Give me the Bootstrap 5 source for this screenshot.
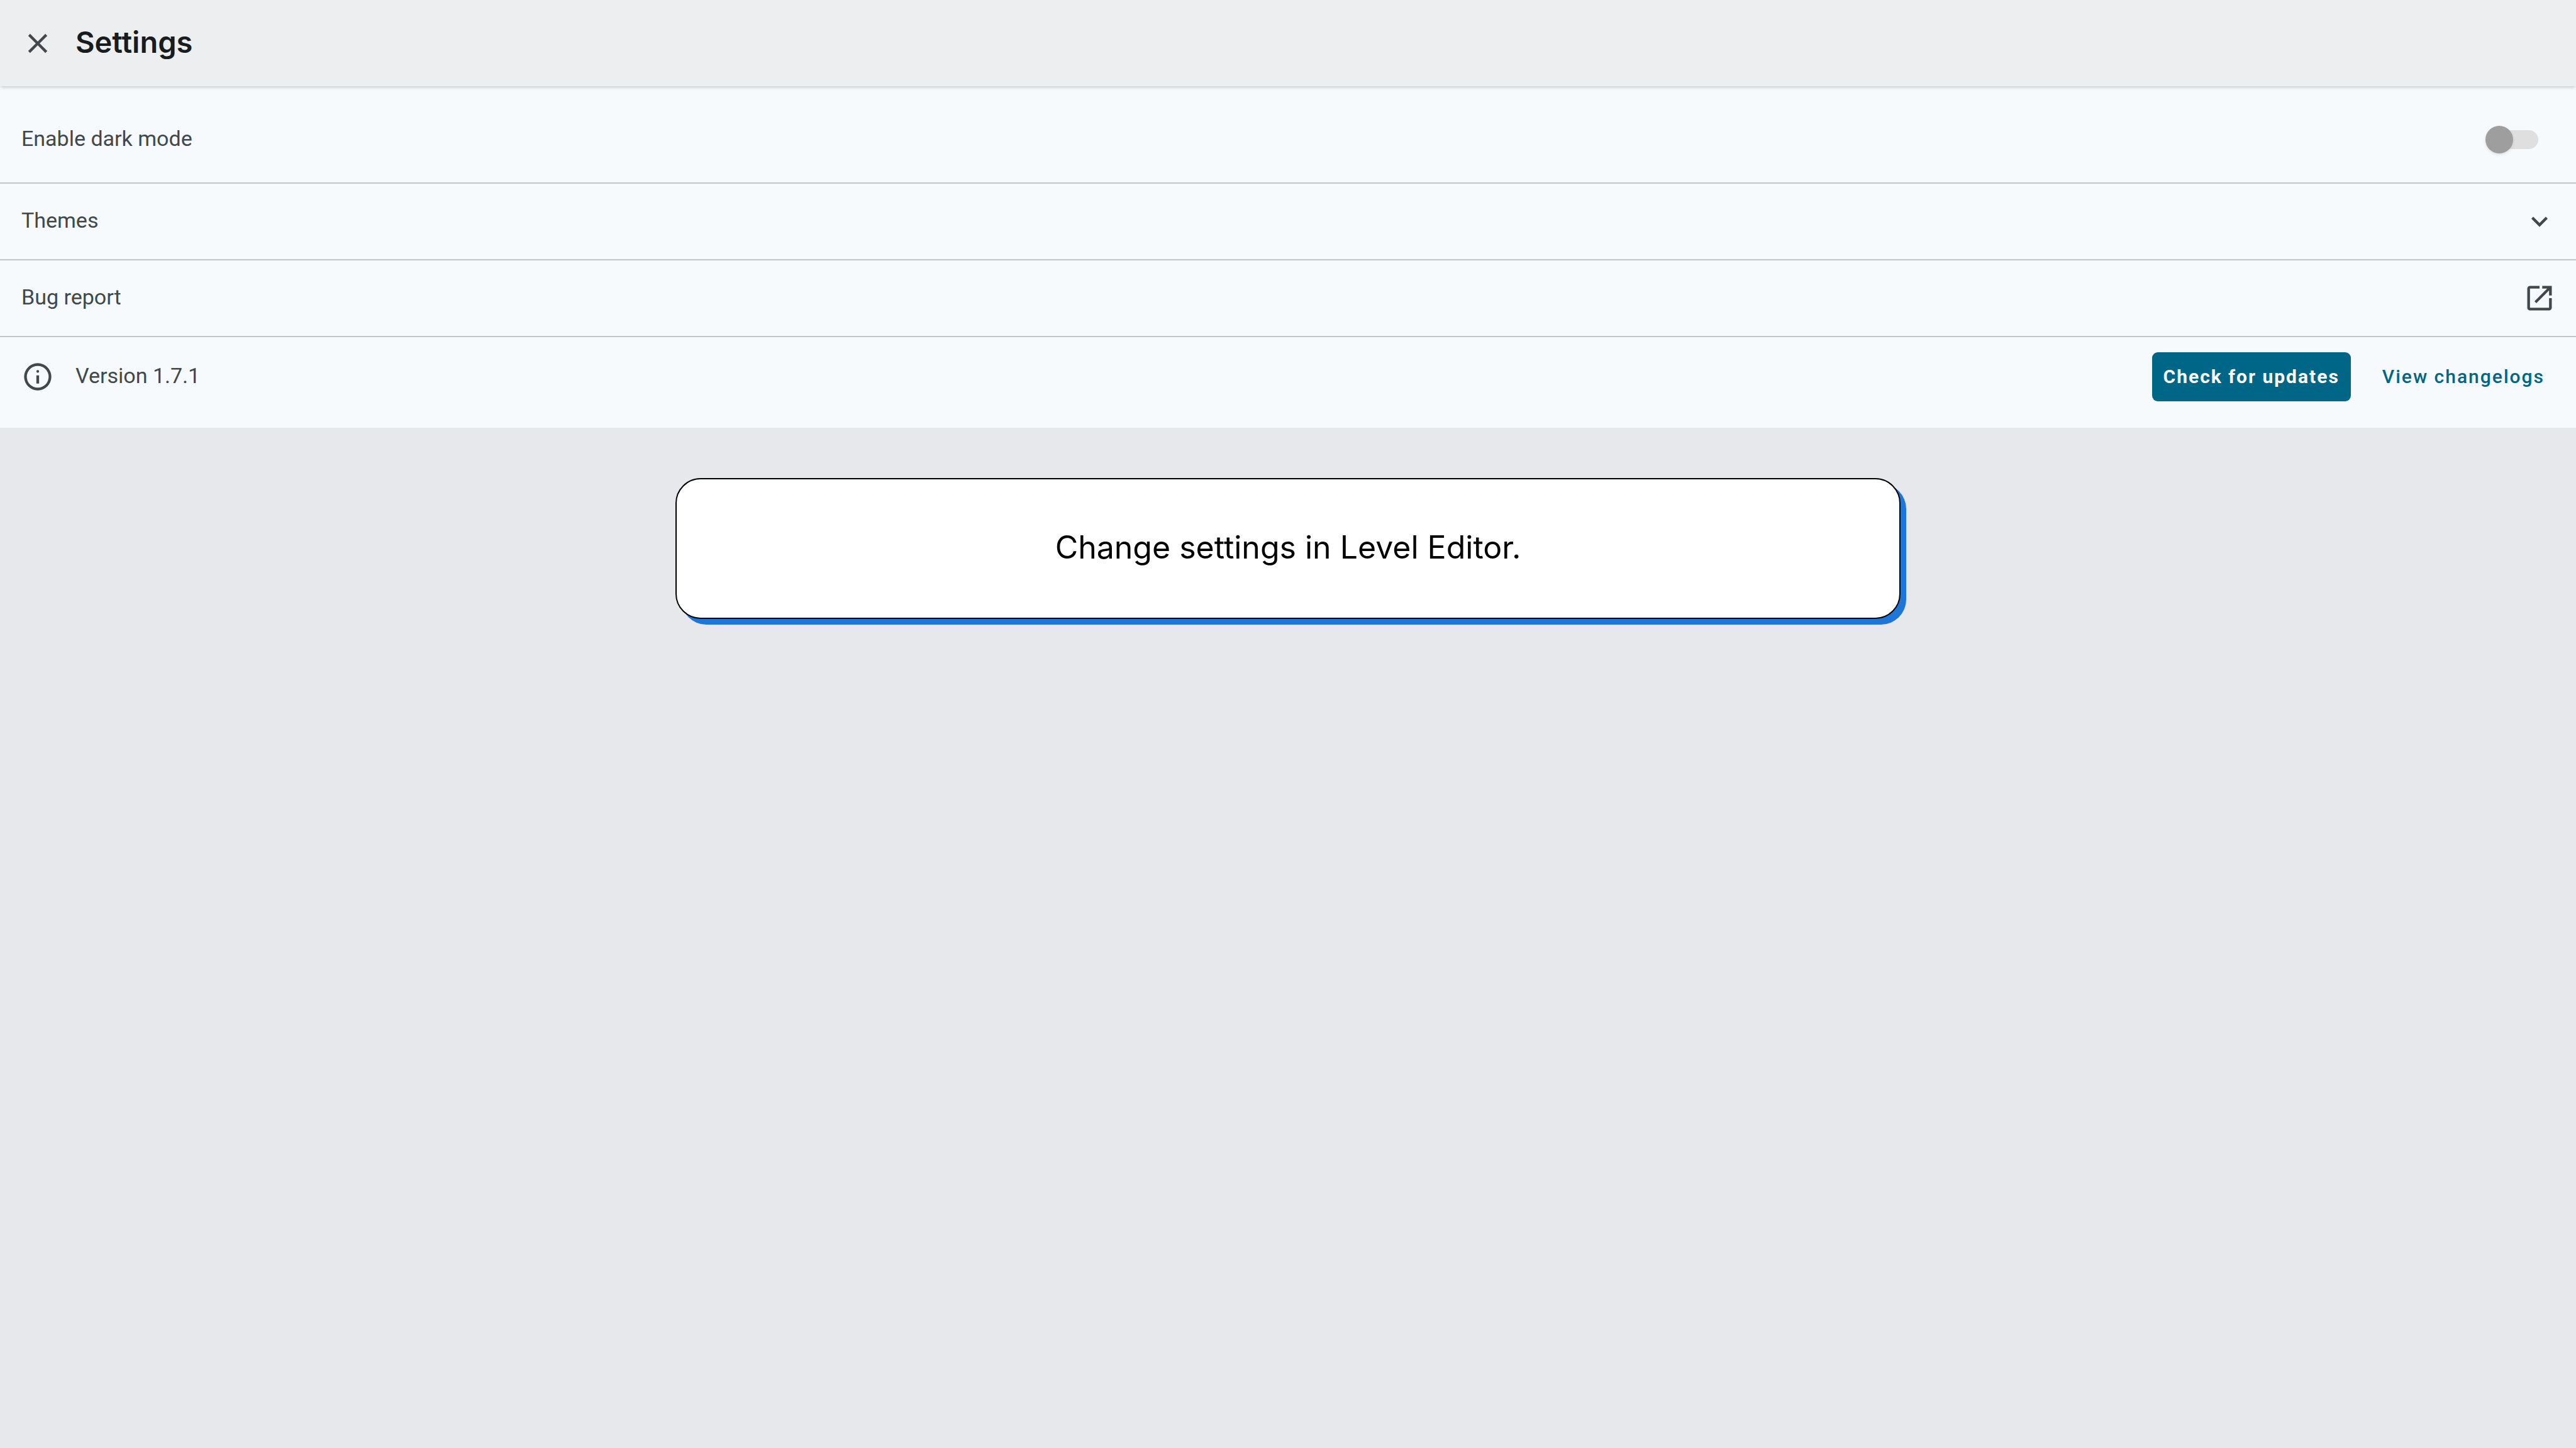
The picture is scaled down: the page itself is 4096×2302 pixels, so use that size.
<!DOCTYPE html>
<html lang="en">
<head>
<meta charset="utf-8">
<meta name="viewport" content="width=device-width, initial-scale=1">
<title>Settings</title>
<link href="https://cdn.jsdelivr.net/npm/bootstrap@5.3.0/dist/css/bootstrap.min.css" rel="stylesheet">
<style>
  body { background: #e6e8ec; color: #40484c; font-family: Roboto, sans-serif; font-size: 34px; line-height: 48px; }
  .icon { width: 52px; height: 52px; fill: #40484c; flex: none; display: block; }
  .app-bar { background: #edeef0; min-height: 137px; padding: 0 32px 0 34px; gap: 34px; z-index: 1; box-shadow: 0 4px 5px -2px rgba(0, 0, 0, .2); }
  .app-title { color: #191c1e; font-family: Inter, sans-serif; font-size: 47px; line-height: 56px; font-weight: 600; padding-bottom: 4px; }
  .settings-list { background: #f6fafd; }
  .setting { min-height: 122px; padding: 0 32px 0 34px; gap: 34px; color: #40484c; background: transparent; border: 0; border-bottom: 2px solid #c0c8cd; text-align: left; }
  .setting-label { padding-bottom: 4px; }
  .setting-dark { min-height: 155px; padding-top: 16px; }
  .setting-version { min-height: 144px; padding-bottom: 18px; border-bottom: 0; }
  .toggle { appearance: none; position: relative; width: 84px; height: 44px; margin: 0 28px 0 0; background: transparent; cursor: pointer; }
  .toggle::before { content: ""; position: absolute; inset: 7px 0 7px 14px; border-radius: 15px; background: #dfdfdf; }
  .toggle::after { content: ""; position: absolute; left: 0; top: 0; width: 44px; height: 44px; border-radius: 50%; background: #9e9e9e; box-shadow: 0 2px 4px rgba(0, 0, 0, .1); }
  .toggle:checked::after { left: 40px; background: #006687; }
  .action { font-size: 30px; line-height: 42px; padding: 18px; border: 0; border-radius: 9px; letter-spacing: 2px; }
  .action-main, .action-main:hover { background: #006687; color: #fff; font-weight: 700; }
  .action-text { color: #006687; font-weight: 500; }
  .action-group { gap: 32px; }
  .message { width: 47.56%; min-height: 224px; margin-top: 80px; padding-bottom: 4px; border: 2px solid #000; border-radius: 40px; background: #fff; color: #000; box-shadow: 9px 9px 0 #1f76d9; font-family: Inter, sans-serif; font-size: 50px; line-height: 64px; }
</style>
<script src="https://cdn.jsdelivr.net/npm/bootstrap@5.3.0/dist/js/bootstrap.bundle.min.js"></script>
</head>
<body class="min-vh-100">
<header class="app-bar d-flex align-items-center position-relative">
  <button type="button" class="btn p-0 border-0" aria-label="Close">
    <svg class="icon" viewBox="0 0 24 24" aria-hidden="true"><path d="M19 6.41 17.59 5 12 10.59 6.41 5 5 6.41 10.59 12 5 17.59 6.41 19 12 13.41 17.59 19 19 17.59 13.41 12z"/></svg>
  </button>
  <h1 class="app-title m-0">Settings</h1>
</header>
<main>
  <section class="settings-list d-flex flex-column">
    <div class="setting setting-dark d-flex align-items-center justify-content-between">
      <label class="setting-label" for="dark-mode">Enable dark mode</label>
      <input class="toggle" type="checkbox" role="switch" id="dark-mode">
    </div>
    <button type="button" class="setting d-flex align-items-center justify-content-between w-100">
      <span class="setting-label">Themes</span>
      <svg class="icon" viewBox="0 0 24 24" aria-hidden="true"><path d="M16.59 8.59 12 13.17 7.41 8.59 6 10l6 6 6-6z"/></svg>
    </button>
    <a href="#bug-report" class="setting d-flex align-items-center justify-content-between text-decoration-none">
      <span class="setting-label">Bug report</span>
      <svg class="icon" viewBox="0 0 24 24" aria-hidden="true"><path d="M5 21q-.825 0-1.412-.587Q3 19.825 3 19V5q0-.825.588-1.413Q4.175 3 5 3h7v2H5v14h14v-7h2v7q0 .825-.587 1.413Q19.825 21 19 21Zm4.7-5.3-1.4-1.4L17.6 5H14V3h7v7h-2V6.4Z"/></svg>
    </a>
    <div class="setting setting-version d-flex align-items-center">
      <svg class="icon" viewBox="0 0 24 24" aria-hidden="true"><path d="M11 17h2v-6h-2zm1-8q.425 0 .713-.288Q13 8.425 13 8t-.287-.713Q12.425 7 12 7t-.712.287Q11 7.575 11 8t.288.712Q11.575 9 12 9zm0 13a10 10 0 1 1 0-20 10 10 0 0 1 0 20zm0-2a8 8 0 1 0 0-16 8 8 0 0 0 0 16z"/></svg>
      <span class="setting-label me-auto">Version 1.7.1</span>
      <div class="action-group d-flex align-items-center">
        <button type="button" class="btn action action-main">Check for updates</button>
        <button type="button" class="btn action action-text">View changelogs</button>
      </div>
    </div>
  </section>
  <p class="message mx-auto mb-0 d-flex align-items-center justify-content-center text-center">Change settings in Level Editor.</p>
</main>
</body>
</html>
